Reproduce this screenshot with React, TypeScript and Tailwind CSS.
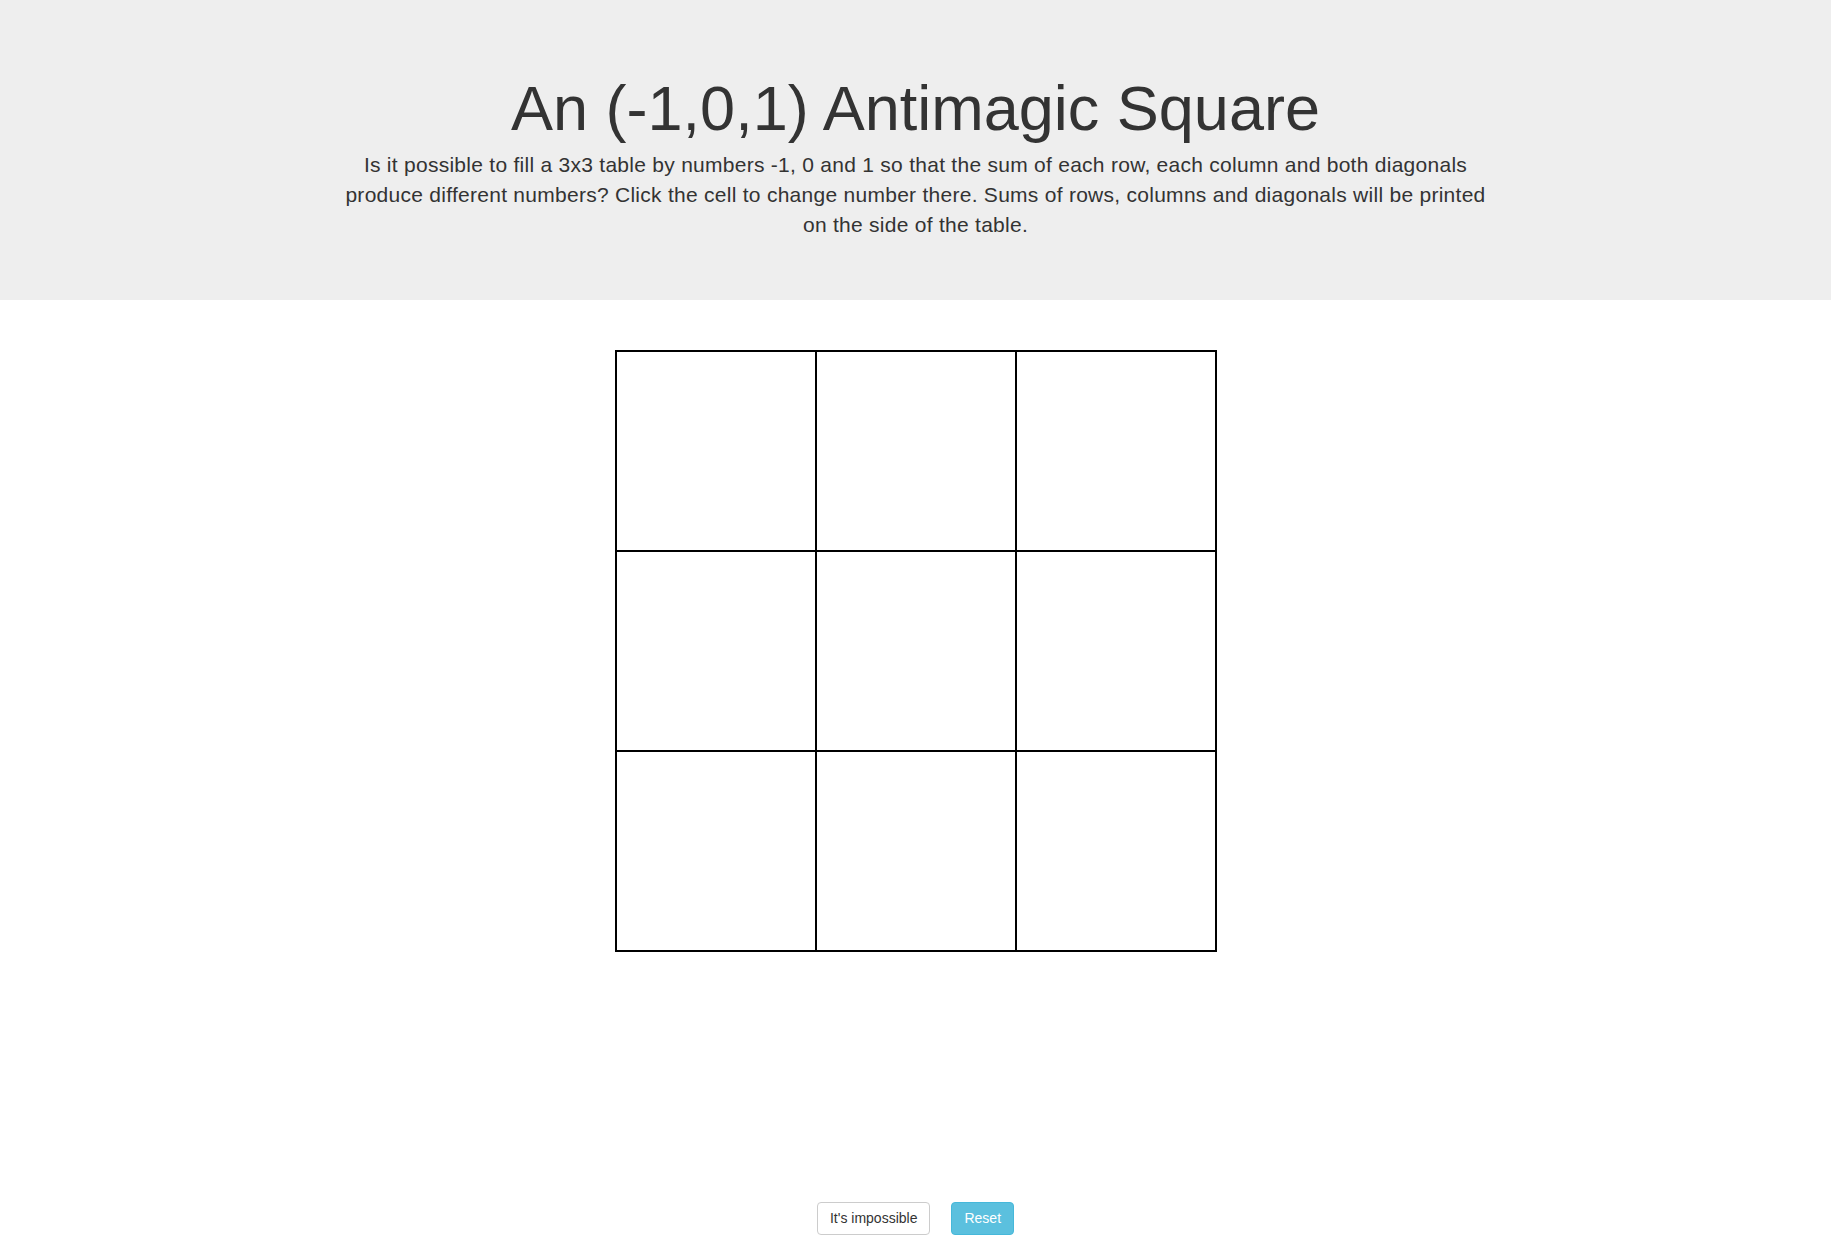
import React, { useState } from 'react'

const values = [null, -1, 0, 1] as const

export default function App() {
   const [cells, setCells] = useState<number[]>(Array(9).fill(0))

   const cycle = (i: number) => {
      setCells(prev => prev.map((v, j) => (j === i ? (v + 1) % 4 : v)))
   }

   return (
      <div className="min-h-screen bg-white text-[#333]" style={{ fontFamily: '"Liberation Sans", Arial, sans-serif' }}>
         {/* HEADER */}
         <div className="bg-[#eeeeee] h-[300px] pt-[74px]">
            <div className="mx-auto w-[1160px] text-center">
               <h1 className="text-[63px] leading-[1.1] font-normal">An (-1,0,1) Antimagic Square</h1>
               <p className="mt-[7px] text-[21px] leading-[30px] tracking-[0.27px]">
                  Is it possible to fill a 3x3 table by numbers -1, 0 and 1 so that the sum of each row, each column and both diagonals produce different
                  numbers? Click the cell to change number there. Sums of rows, columns and diagonals will be printed on the side of the table.
               </p>
            </div>
         </div>

         {/* GRID */}
         <div className="flex justify-center pt-[50px]">
            <div className="grid grid-cols-3 border-l-2 border-t-2 border-black">
               {cells.map((v, i) => (
                  <div
                     key={i}
                     onClick={() => cycle(i)}
                     className="w-[200px] h-[200px] border-r-2 border-b-2 border-black flex items-center justify-center text-[64px] cursor-pointer select-none"
                  >
                     {values[v] ?? ''}
                  </div>
               ))}
            </div>
         </div>

         {/* BUTTONS */}
         <div className="flex justify-center gap-[21px] pt-[250px] pb-[20px]">
            <button className="h-[33px] px-[12px] text-[14px] bg-white border border-[#cccccc] rounded-[4px] text-[#333]">It's impossible</button>
            <button onClick={() => setCells(Array(9).fill(0))} className="h-[33px] px-[12px] text-[14px] bg-[#5bc0de] border border-[#46b8da] rounded-[4px] text-white">
               Reset
            </button>
         </div>
      </div>
   )
}
